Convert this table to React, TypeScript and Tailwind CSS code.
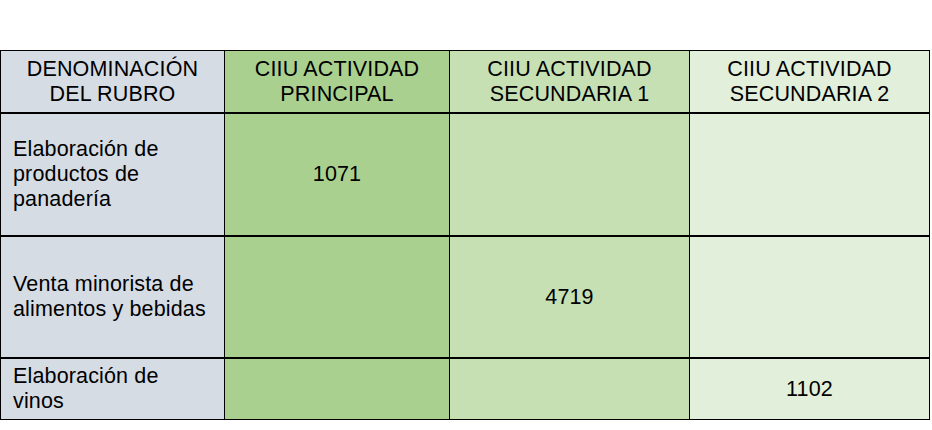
import { Fragment } from "react";

const headers = [
  { label: ["DENOMINACIÓN", "DEL RUBRO"], bg: "bg-[#d6dce4]" },
  { label: ["CIIU ACTIVIDAD", "PRINCIPAL"], bg: "bg-[#a9d08e]" },
  { label: ["CIIU ACTIVIDAD", "SECUNDARIA 1"], bg: "bg-[#c6e0b4]" },
  { label: ["CIIU ACTIVIDAD", "SECUNDARIA 2"], bg: "bg-[#e2efda]" },
];

const rows = [
  { name: ["Elaboración de", "productos de", "panadería"], codes: ["1071", "", ""] },
  { name: ["Venta minorista de", "alimentos y bebidas"], codes: ["", "4719", ""] },
  { name: ["Elaboración de", "vinos"], codes: ["", "", "1102"] },
];

const codeBg = ["bg-[#a9d08e]", "bg-[#c6e0b4]", "bg-[#e2efda]"];

export default function App() {
  return (
    <div className="w-[932px] h-[430px] bg-white pt-[50px] font-['Liberation_Sans',Arial,sans-serif] text-black text-[21.5px] leading-[25px] tracking-[0.15px]">
      <div className="grid w-[930px] grid-cols-[223px_224px_239px_239px] grid-rows-[61px_121px_120px_60px] gap-x-px gap-y-[2px] bg-black p-px">
        {headers.map((h, i) => (
          <div key={i} className={`${h.bg} flex flex-col items-center justify-center text-center`}>
            {h.label.map((l) => (
              <span key={l}>{l}</span>
            ))}
          </div>
        ))}
        {rows.map((r, ri) => (
          <Fragment key={ri}>
            <div className="bg-[#d6dce4] flex flex-col justify-center pl-3">
              {r.name.map((l) => (
                <span key={l}>{l}</span>
              ))}
            </div>
            {r.codes.map((c, ci) => (
              <div key={ci} className={`${codeBg[ci]} flex items-center justify-center`}>
                {c}
              </div>
            ))}
          </Fragment>
        ))}
      </div>
    </div>
  );
}
